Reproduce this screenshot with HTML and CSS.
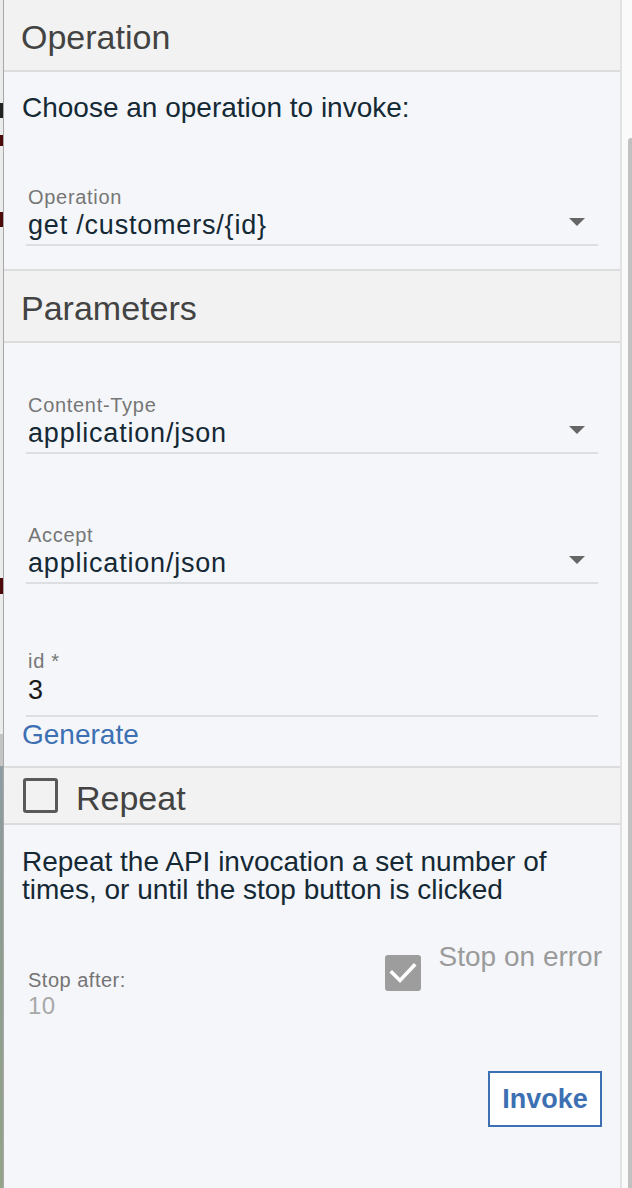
FILE: index.html
```html
<!DOCTYPE html>
<html lang="en">
<head>
<meta charset="utf-8">
<title>Operation</title>
<link rel="stylesheet" href="styles.css">
</head>
<body>
<div class="screen">
  <div class="underlay"></div>
  <main class="panel">
    <section class="sec">
      <div class="sec-head first">Operation</div>
      <div class="sec-body body-op">
        <p class="intro">Choose an operation to invoke:</p>
        <div class="field select first-field">
          <div class="field-label">Operation</div>
          <div class="field-value"><span>get /customers/{id}</span><span class="caret"></span></div>
        </div>
      </div>
    </section>

    <section class="sec">
      <div class="sec-head">Parameters</div>
      <div class="sec-body body-params">
        <div class="field select">
          <div class="field-label">Content-Type</div>
          <div class="field-value"><span>application/json</span><span class="caret"></span></div>
        </div>
        <div class="field select gap-field">
          <div class="field-label">Accept</div>
          <div class="field-value"><span>application/json</span><span class="caret"></span></div>
        </div>
        <div class="field text id-field">
          <div class="field-label">id *</div>
          <div class="field-value"><span>3</span></div>
        </div>
        <a class="link">Generate</a>
      </div>
    </section>

    <section class="sec">
      <div class="sec-head repeat-head">
        <span class="box"></span>
        <span class="repeat-label">Repeat</span>
      </div>
      <div class="sec-body body-repeat">
        <p class="desc">Repeat the API invocation a set number of times, or until the stop button is clicked</p>
        <div class="options">
          <div class="stop-after">
            <div class="sa-label">Stop after:</div>
            <div class="sa-value">10</div>
          </div>
          <div class="stop-error">
            <span class="box-checked">
              <svg width="36" height="36" viewBox="0 0 36 36"><path d="M7 17.5 L15 25.5 L29 10.5" fill="none" stroke="#ffffff" stroke-width="3.6" stroke-linecap="square" stroke-linejoin="miter"/></svg>
            </span>
            <span class="se-label">Stop on error</span>
          </div>
        </div>
        <div class="actions">
          <button class="invoke" type="button">Invoke</button>
        </div>
      </div>
    </section>
  </main>
  <div class="gutter"><div class="thumb"></div></div>
</div>
</body>
</html>
```

FILE: styles.css
```css
html, body {
  margin: 0;
  padding: 0;
}
body {
  font-family: "Liberation Sans", Arial, Helvetica, sans-serif;
  color: #152935;
  background: #f4f6fa;
}
.screen {
  display: flex;
  width: 632px;
  height: 1188px;
  overflow: hidden;
}
.underlay {
  flex: 0 0 3px;
  border-right: 1px solid #a8a8a8;
  background: linear-gradient(to bottom,
    #ebebeb 0, #ebebeb 103px,
    #222222 103px, #222222 118px,
    #ebebeb 118px, #ebebeb 135px,
    #4d0a0a 135px, #4d0a0a 146px,
    #ebebeb 146px, #ebebeb 212px,
    #4d0a0a 212px, #4d0a0a 227px,
    #ebebeb 227px, #ebebeb 578px,
    #4d0a0a 578px, #4d0a0a 594px,
    #ebebeb 594px, #ebebeb 734px,
    #c4c4c4 734px, #c4c4c4 766px,
    #8f9ca3 766px, #8e9b92 900px, #94a389 1188px);
}
.panel {
  flex: 1 1 auto;
  background: #f4f6fa;
  border-right: 2px solid #e2e2e2;
  display: flex;
  flex-direction: column;
}
.gutter {
  flex: 0 0 10px;
  background: #fafafa;
  display: flex;
  justify-content: flex-end;
  align-items: flex-start;
}
.thumb {
  width: 4px;
  margin-top: 138px;
  height: 1100px;
  background: #c1c1c1;
  border-radius: 3px 0 0 0;
}

/* section headers */
.sec-head {
  height: 67px;
  padding: 3px 17px 0;
  display: flex;
  align-items: center;
  background: #f2f2f2;
  border-top: 2px solid #dcdcdc;
  border-bottom: 2px solid #dcdcdc;
  font-size: 34px;
  color: #434343;
  line-height: 40px;
}
.sec-head.first {
  border-top: 0;
}
.sec-body {
  padding: 0 18px;
}
.body-op {
  padding-top: 20px;
  padding-bottom: 23px;
}
.body-params {
  padding-top: 50px;
  padding-bottom: 15px;
}
.body-repeat {
  padding-top: 23px;
}

.intro {
  margin: 0;
  font-size: 28px;
  line-height: 32px;
}

/* fields */
.field {
  margin: 0 4px;
  padding: 0 2px 3px;
  border-bottom: 2px solid #dcdee2;
}
.first-field {
  margin-top: 61px;
}
.gap-field {
  margin-top: 69px;
}
.id-field {
  margin-top: 65px;
  padding-bottom: 8px;
}
.field-label {
  font-size: 20px;
  line-height: 24px;
  letter-spacing: 0.7px;
  color: #767676;
}
.field-value {
  display: flex;
  justify-content: space-between;
  align-items: center;
  font-size: 27px;
  line-height: 32px;
  letter-spacing: 0.8px;
  color: #152935;
}
.id-field .field-value {
  line-height: 34px;
  color: #1a1a1a;
}
.caret {
  width: 0;
  height: 0;
  border-left: 8px solid transparent;
  border-right: 8px solid transparent;
  border-top: 8px solid #666666;
  margin-right: 11px;
  margin-top: -6px;
}
.link {
  display: block;
  padding-top: 2px;
  font-size: 28px;
  line-height: 32px;
  color: #3d70b2;
  cursor: pointer;
}

/* repeat header */
.repeat-head {
  height: 55px;
  padding: 0 18px;
}
.box {
  width: 29px;
  height: 29px;
  border: 3px solid #595959;
  border-radius: 3px;
  flex: 0 0 auto;
  margin-left: 1px;
  margin-right: 18px;
}
.repeat-label {
  padding-top: 4px;
}

.desc {
  margin: 0;
  font-size: 28px;
  line-height: 28px;
}
.options {
  margin-top: 35px;
  display: flex;
  justify-content: space-between;
  align-items: flex-start;
}
.stop-after {
  margin-left: 6px;
  padding-top: 29px;
}
.sa-label {
  font-size: 20px;
  line-height: 24px;
  letter-spacing: 0.5px;
  color: #747474;
}
.sa-value {
  font-size: 24px;
  line-height: 28px;
  letter-spacing: 0.5px;
  color: #a8a8a8;
}
.stop-error {
  display: flex;
  align-items: flex-start;
}
.box-checked {
  width: 36px;
  height: 36px;
  margin-top: 16px;
  margin-right: 18px;
  background: #9d9d9d;
  border-radius: 3px;
  display: block;
}
.box-checked svg {
  display: block;
}
.se-label {
  padding-top: 2px;
  font-size: 28px;
  line-height: 32px;
  color: #9b9b9b;
}
.actions {
  margin-top: 51px;
  display: flex;
  justify-content: flex-end;
}
.invoke {
  width: 114px;
  height: 56px;
  border: 2px solid #3d70b2;
  background: #ffffff;
  color: #3d70b2;
  font-family: "Liberation Sans", Arial, Helvetica, sans-serif;
  font-weight: bold;
  font-size: 27px;
  padding: 0;
  border-radius: 0;
}
```
